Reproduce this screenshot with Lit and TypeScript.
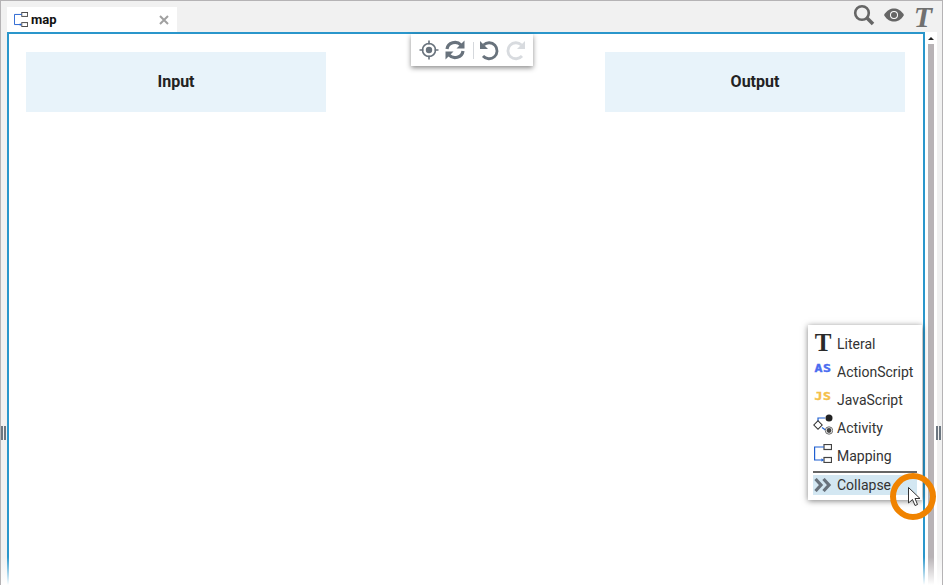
import { LitElement, html, css, svg } from "lit";
import { customElement } from "lit/decorators.js";

const mapIcon = (w: number, h: number) => svg`<svg width=${w} height=${h} viewBox="0 0 18 19" fill="none">
  <rect x="10" y="0.500" width="7.500" height="5" fill="#fff" stroke="#444" stroke-width="1.200"/>
  <rect x="10" y="13.500" width="7.500" height="5" fill="#fff" stroke="#444" stroke-width="1.200"/>
  <path d="M10 3H0.600V16H8" stroke="#1f5fd0" stroke-width="1.200"/>
  <path d="M7.500 14.300L10 16l-2.500 1.700z" fill="#1f5fd0"/>
</svg>`;

@customElement("app-root")
export class AppRoot extends LitElement {
  static styles = css`
    :host { display: block; width: 943px; height: 585px; overflow: hidden; font-family: Roboto, sans-serif; color: #222; background: #fff; }
    .frame { position: relative; box-sizing: border-box; height: 585px; display: flex; flex-direction: column; border: 1px solid #b5b3b5; border-bottom: 0; background: #fff; overflow: hidden; }
    .head { height: 31px; flex: none; background: #f1f1f1; display: flex; align-items: flex-end; justify-content: space-between; padding-left: 6px; }
    .tab { width: 170px; height: 25px; box-sizing: border-box; background: #fff; display: flex; align-items: center; padding: 0 8px 0 7px; font-size: 13px; font-weight: 700; color: #111; }
    .tab svg { flex: none; margin-right: 3px; }
    .tab .lbl { flex: 1; }
    .tab svg.close { margin: 0; }
    .tools { display: flex; align-items: center; gap: 9px; align-self: stretch; padding: 0 9px 3px 0; }
    .bigT { font: italic 700 30px/24px "Liberation Serif", serif; color: #707070; width: 20px; text-align: center; margin-top: 3px; }
    .body { flex: 1; display: flex; min-height: 0; }
    .gutter { width: 6px; flex: none; background: #f1f1f1; }
    .canvas { flex: none; width: 918px; box-sizing: border-box; border: 2px solid #2a96cb; border-bottom: 0; padding: 18px 18px 0 17px; display: flex; justify-content: space-between; align-items: flex-start; background: #fff; }
    .col { width: 300px; height: 60px; padding-bottom: 2px; box-sizing: border-box; background: #e8f3fa; display: flex; align-items: center; justify-content: center; font-size: 16px; font-weight: 700; color: #222; }
    .rgut { flex: 1; background: #f1f1f1; display: flex; }
    .track { width: 12px; background: #fff; display: flex; flex-direction: column; align-items: center; }
    .up { width: 0; height: 0; border: 3px solid transparent; border-bottom: 3px solid #222; border-top: 0; margin: 5px 0 4px; }
    .thumb { flex: 1; width: 6px; background: #b8b3b6; }
    .grip { position: absolute; width: 5px; height: 14px; top: 425px; border-left: 2px solid #6c7680; border-right: 2px solid #6c7680; box-sizing: border-box; }
    .grip.l { left: 0; }
    .grip.r { left: 935px; }
    .toolbar { position: absolute; left: 410px; top: 33px; width: 122px; height: 32px; background: #fff; box-shadow: 0 2px 5px rgba(0,0,0,.45); display: flex; align-items: center; padding-left: 8px; box-sizing: border-box; }
    .toolbar svg { flex: none; }
    .sep { width: 1px; height: 17px; background: #d5d8dc; margin: 0 4px 0 7px; }
    .menu { position: absolute; left: 807px; top: 324px; width: 114px; height: 175px; box-sizing: border-box; background: #fff; box-shadow: 0 1px 6px rgba(0,0,0,.5); padding: 5px; font-size: 14px; color: #333; }
    .row { height: 28px; display: flex; align-items: center; position: relative; padding-left: 24px; }
    .mi { position: absolute; left: 0; display: flex; align-items: center; justify-content: center; width: 20px; }
    .mi.full { top: 0; }
    .mi.map { top: 2px; }
    .tt { font: 700 25px/24px "Liberation Serif", serif; color: #2a2a2a; top: 1px; }
    .as, .js { font: 700 11px/12px "DejaVu Sans Mono", monospace; letter-spacing: 0.5px; top: 5px; transform: scaleX(1.2); -webkit-text-stroke: 0.4px currentColor; }
    .as { color: #4a6cf0; }
    .js { color: #f5c04a; }
    .rule { height: 2px; background: #666; margin: 1px 0 2px; }
    .row.sel { height: 20px; background: #d3e7f2; }
    .ring { position: absolute; left: 889px; top: 472px; width: 46px; height: 47px; box-sizing: border-box; border: 6px solid #f08300; border-radius: 50%; }
    .cursor { position: absolute; left: 905px; top: 485px; }
    .fade { position: absolute; left: 0; right: 0; bottom: 0; height: 28px; background: linear-gradient(to bottom, rgba(255,255,255,0), #fff); }
  `;

  render() {
    return html`<div class="frame">
      <div class="head">
        <div class="tab">
          ${mapIcon(14, 15)}<span class="lbl">map</span>
          <svg class="close" width="10" height="10" viewBox="0 0 10 10"><path d="M1 1l8 8M9 1l-8 8" stroke="#a0a0a0" stroke-width="2"/></svg>
        </div>
        <div class="tools">
          <svg width="22" height="22" viewBox="0 0 22 22" fill="none"><circle cx="9" cy="9" r="6.800" stroke="#666" stroke-width="2.600"/><path d="M14 14l6 6" stroke="#666" stroke-width="3.600"/></svg>
          <svg width="20" height="14" viewBox="0 0 20 14"><path d="M0 7C3 2 6.500 0.500 10 0.500S17 2 20 7c-3 5-6.500 6.500-10 6.500S3 12 0 7z" fill="#666"/><circle cx="10" cy="7" r="4" fill="#fff"/><circle cx="10" cy="7" r="3" fill="#666"/></svg>
          <span class="bigT">T</span>
        </div>
      </div>
      <div class="body">
        <div class="gutter"></div>
        <div class="canvas">
          <div class="col">Input</div>
          <div class="col">Output</div>
        </div>
        <div class="rgut"><div class="track"><div class="up"></div><div class="thumb"></div></div></div>
      </div>
      <div class="grip l"></div><div class="grip r"></div>
      <div class="toolbar">
        <svg width="20" height="20" viewBox="0 0 20 20" fill="none"><circle cx="10" cy="10" r="6.500" stroke="#68727c" stroke-width="1.600"/><circle cx="10" cy="10" r="3.200" fill="#68727c"/><path d="M10 0.500v4M10 15.500v4M0.500 10h4M15.500 10h4" stroke="#68727c" stroke-width="1.600"/></svg>
        <svg style="margin-left:5px" width="22" height="22" viewBox="0 0 22 22" fill="none"><path d="M3 10a8 7.500 0 0 1 14-4" stroke="#68727c" stroke-width="3.200"/><path d="M20.500 1.500v8h-8z" fill="#68727c"/><path d="M19 12a8 7.500 0 0 1-14 4" stroke="#68727c" stroke-width="3.200"/><path d="M1.500 20.500v-8h8z" fill="#68727c"/></svg>
        <div class="sep"></div>
        <svg width="22" height="22" viewBox="0 0 22 22" fill="none"><path d="M5.500 6A8 8 0 1 1 5 17" stroke="#68727c" stroke-width="2.800"/><path d="M2 2v8h8z" fill="#68727c"/></svg>
        <svg style="margin-left:5px" width="22" height="22" viewBox="0 0 22 22" fill="none"><path d="M16.500 6A8 8 0 1 0 17 17" stroke="#d8dbdf" stroke-width="2.800"/><path d="M20 2v8h-8z" fill="#d8dbdf"/></svg>
      </div>
      <div class="menu">
        <div class="row"><span class="mi tt">T</span>Literal</div>
        <div class="row"><span class="mi as">AS</span>ActionScript</div>
        <div class="row"><span class="mi js">JS</span>JavaScript</div>
        <div class="row"><span class="mi full"><svg width="20" height="28" viewBox="0 0 20 28" fill="none"><path d="M5 7V4H12" stroke="#1f5fd0" stroke-width="1.200"/><path d="M9 13.500L12.500 16" stroke="#1f5fd0" stroke-width="1.200"/><circle cx="16" cy="4" r="3.500" fill="#222"/><rect x="2" y="8" width="6" height="6" transform="rotate(45 5 11)" fill="#fff" stroke="#333"/><circle cx="16" cy="16.500" r="3.700" fill="#fff" stroke="#666"/><circle cx="16" cy="16.500" r="2.400" fill="#444"/></svg></span>Activity</div>
        <div class="row"><span class="mi full map">${mapIcon(18, 19)}</span>Mapping</div>
        <div class="rule"></div>
        <div class="row sel"><span class="mi"><svg width="18" height="14" viewBox="0 0 18 14" fill="none"><path d="M1.500 1L7 7l-5.500 6M9.500 1L15 7l-5.500 6" stroke="#68727c" stroke-width="3.200"/></svg></span>Collapse</div>
      </div>
      <div class="fade"></div>
      <div class="ring"></div>
      <svg class="cursor" width="16" height="22" viewBox="0 0 16 22"><path d="M2.500 1.500V17l4-3.500 2.500 6 2.500-1-2.500-6h5z" fill="#fff" stroke="#333"/></svg>
    </div>`;
  }
}
